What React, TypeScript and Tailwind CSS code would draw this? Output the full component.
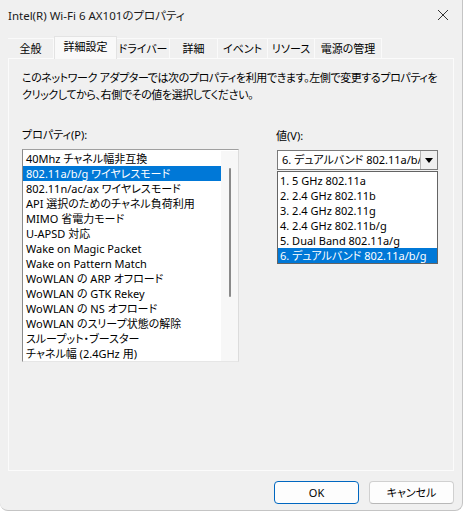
import React from "react";

const props = [
  "40Mhz チャネル幅非互換",
  "802.11a/b/g ワイヤレスモード",
  "802.11n/ac/ax ワイヤレスモード",
  "API 選択のためのチャネル負荷利用",
  "MIMO 省電力モード",
  "U-APSD 対応",
  "Wake on Magic Packet",
  "Wake on Pattern Match",
  "WoWLAN の ARP オフロード",
  "WoWLAN の GTK Rekey",
  "WoWLAN の NS オフロード",
  "WoWLAN のスリープ状態の解除",
  "スループット・ブースター",
  "チャネル幅 (2.4GHz 用)",
];

const values = [
  "1. 5 GHz 802.11a",
  "2. 2.4 GHz 802.11b",
  "3. 2.4 GHz 802.11g",
  "4. 2.4 GHz 802.11b/g",
  "5. Dual Band 802.11a/g",
  "6. デュアルバンド 802.11a/b/g",
];

const tabs: { label: string; w: string; sel?: boolean }[] = [
  { label: "全般", w: "w-[46px]" },
  { label: "詳細設定", w: "w-[63px]", sel: true },
  { label: "ドライバー", w: "w-[53px]" },
  { label: "詳細", w: "w-[48px]" },
  { label: "イベント", w: "w-[50px]" },
  { label: "リソース", w: "w-[47px]" },
  { label: "電源の管理", w: "w-[67px]" },
];

export default function App() {
  return (
    <div
      className="w-[465px] h-[515px] bg-white text-[11px] text-black [font-feature-settings:'palt'] overflow-hidden"
      style={{ fontFamily: '"Noto Sans", "Noto Sans CJK JP", sans-serif' }}
    >
      <div className="w-[463px] h-[511px] bg-[#f0f0f0] border-r border-b border-[#c4c4c4] rounded-br-[8px] rounded-bl-[8px] flex flex-col">
        {/* title bar */}
        <div className="h-[30px] flex items-center justify-between pl-[8px] pr-[13px] pt-[1px]">
          <span className="leading-[16px] text-[#1a1a1a] text-[11.5px]">Intel(R) Wi-Fi 6 AX101のプロパティ</span>
          <svg width="12" height="12" viewBox="0 0 12 12" className="mt-[-1px]">
            <path d="M1 1 L11 11 M11 1 L1 11" stroke="#333" strokeWidth="1" />
          </svg>
        </div>
        {/* tabs */}
        <div className="flex items-end h-[28px] pl-[8px]">
          {tabs.map((t) =>
            t.sel ? (
              <div
                key={t.label}
                className={`${t.w} h-[23px] bg-[#f9f9f9] border-t border-l border-r border-[#e3e3e3] text-center leading-[20px] relative z-10 mb-[-1px] whitespace-nowrap`}
              >
                {t.label}
              </div>
            ) : (
              <div
                key={t.label}
                className={`${t.w} h-[20px] border-t border-r border-[#fafafa] text-center leading-[19px] whitespace-nowrap`}
              >
                {t.label}
              </div>
            )
          )}
        </div>
        {/* panel */}
        <div className="mx-[8px] h-[413px] border border-[#fbfbfb] bg-[#f0f0f0] pl-[13px] pt-[10px] flex flex-col">
          <p className="leading-[17px] whitespace-nowrap tracking-[-0.4px]">
            このネットワーク アダプターでは次のプロパティを利用できます。左側で変更するプロパティを
            <br />
            クリックしてから、右側でその値を選択してください。
          </p>
          <div className="flex mt-[24px]">
            {/* left */}
            <div className="w-[217px]">
              <div className="leading-[16px] h-[16px]">プロパティ(P):</div>
              <div className="mt-[6px] h-[213px] bg-white border-t border-l border-t-[#a0a0a0] border-l-[#8a8a8a] border-r border-b border-r-[#dcdcdc] border-b-[#e6e6e6] flex pt-[1px]">
                <div className="flex-1 flex flex-col">
                  {props.map((p, i) => (
                    <div
                      key={p}
                      className={`h-[15px] leading-[15px] pl-[3px] whitespace-nowrap ${
                        i === 1 ? "bg-[#0078d7] text-white" : ""
                      }`}
                    >
                      {p}
                    </div>
                  ))}
                </div>
                <div className="w-[17px] bg-[#f7f7f7] flex justify-center pt-[17px]">
                  <div className="w-[2px] h-[129px] bg-[#8a8a8a] rounded-full" />
                </div>
              </div>
            </div>
            {/* right */}
            <div className="ml-[37px] w-[162px]">
              <div className="leading-[16px] h-[16px] mt-[1px]">値(V):</div>
              <div className="relative mt-[6px]">
                <div className="h-[20px] w-[161px] ml-[1px] bg-white border border-[#7a7a7a] flex">
                  <div className="flex-1 overflow-hidden whitespace-nowrap leading-[18px] pl-[4px]">
                    6. デュアルバンド 802.11a/b/g
                  </div>
                  <div className="w-[17px] h-[18px] bg-[#f0f0f0] border-l border-[#b4b4b4] flex items-center justify-center">
                    <svg width="8" height="5" viewBox="0 0 8 5">
                      <path d="M0 0 L8 0 L4 5 Z" fill="#000" />
                    </svg>
                  </div>
                </div>
                <div className="absolute left-[1px] top-[21px] w-[161px] h-[93px] bg-white border border-[#646464] z-20 flex flex-col pt-[1px]">
                  {values.map((v, i) => (
                    <div
                      key={v}
                      className={`h-[15px] leading-[15px] pl-[2px] whitespace-nowrap ${
                        i === 5 ? "bg-[#0078d7] text-white" : ""
                      }`}
                    >
                      {v}
                    </div>
                  ))}
                </div>
              </div>
            </div>
          </div>
        </div>
        {/* buttons */}
        <div className="flex justify-end gap-[10px] pr-[8px] mt-[10px]">
          <button className="w-[85px] h-[23px] rounded-[4px] border border-[#0067c0] bg-[#fdfdfd] leading-[20px]">
            OK
          </button>
          <button className="w-[85px] h-[23px] rounded-[4px] border border-[#d0d0d0] border-b-[#b8b8b8] bg-[#fdfdfd] leading-[20px]">
            キャンセル
          </button>
        </div>
      </div>
    </div>
  );
}
